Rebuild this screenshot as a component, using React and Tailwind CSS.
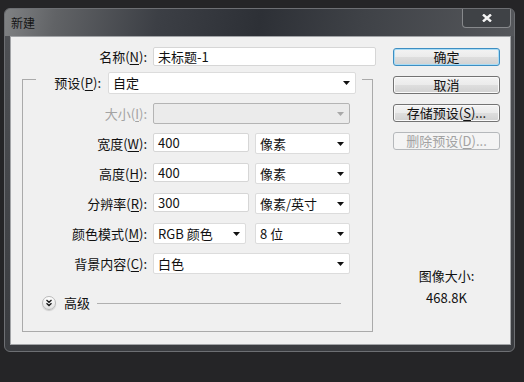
import React from 'react';

const FONT = "font-['Noto_Sans_CJK_SC','Noto_Sans',sans-serif]";

function Caret({ disabled }) {
  return (
    <svg width="7" height="4" viewBox="0 0 7 4" className="shrink-0">
      <path d="M0 0 L7 0 L3.5 4 Z" fill={disabled ? '#a9a9a9' : '#111'} />
    </svg>
  );
}

function Label({ text, hot, w = 'w-[124px]', disabled }) {
  return (
    <span className={`${w} shrink-0 text-right ${disabled ? 'text-[#a3a3a3]' : 'text-[#111]'}`}>
      {text}(<u className="underline-offset-2">{hot}</u>):
    </span>
  );
}

function Input({ value, w }) {
  return (
    <div className={`${w} h-[19px] bg-white border border-[#d6d6d6] rounded-[2px] pl-[4px] flex items-center text-[#111]`}>
      {value}
    </div>
  );
}

function Select({ value, w, disabled, h = 'h-[21px]' }) {
  return (
    <div
      className={`${w} ${h} border rounded-[2px] pl-[4px] pr-[5px] flex items-center justify-between ${
        disabled ? 'bg-[#ebebeb] border-[#b4b4b4]' : 'bg-white border-[#dcdcdc] text-[#111]'
      }`}
    >
      <span>{value}</span>
      <Caret disabled={disabled} />
    </div>
  );
}

function Button({ children, hot, primary, disabled }) {
  return (
    <div
      className={`w-[107px] h-[18px] rounded-[3px] border flex items-center justify-center ${
        disabled
          ? 'border-[#b5b8bb] bg-[#f4f4f4] text-[#a2a2a2]'
          : primary
          ? 'border-[#3d8ec2] shadow-[inset_0_0_0_1px_#a9dcf5] bg-[linear-gradient(to_bottom,#f3f3f3_0%,#ebebeb_50%,#dedede_51%,#d2d2d2_100%)] text-[#111]'
          : 'border-[#737373] shadow-[inset_0_0_0_1px_#fafafa] bg-[linear-gradient(to_bottom,#f3f3f3_0%,#ebebeb_50%,#dedede_51%,#d2d2d2_100%)] text-[#111]'
      }`}
    >
      {children}
      {hot && (
        <>
          (<u className="underline-offset-2">{hot}</u>)...
        </>
      )}
    </div>
  );
}

export default function App() {
  return (
    <div className={`w-[524px] h-[382px] bg-[#252527] pt-[8px] pl-[4px] text-[13px] leading-[18px] ${FONT}`}>
      {/* window frame */}
      <div className="w-[511px] h-[344px] rounded-[6px] border border-[#6d6f73] bg-[linear-gradient(to_bottom,#505256,#3a3c40)] flex flex-col overflow-hidden">
        {/* title bar */}
        <div className="h-[27px] shrink-0 flex justify-between bg-[linear-gradient(100deg,#808284_0%,#616366_10%,#3c3f45_30%,#2d3036_50%,#3f4247_70%,#55575b_100%)]">
          <span className="ml-[6px] mt-[5px] text-[12px] text-[#151515]">新建</span>
          <div className="mr-[3px] w-[49px] h-[19px] rounded-b-[4px] border border-t-0 border-[#87898c] bg-[#3f4246] flex items-center justify-center">
            <svg width="10" height="8" viewBox="0 0 10 8">
              <path d="M1 0.5 L9 7.5 M9 0.5 L1 7.5" stroke="#f4f4f4" strokeWidth="2.4" />
            </svg>
          </div>
        </div>

        {/* client area */}
        <div className="flex-1 ml-[5px] mr-[3px] mb-[6px] border border-[#a2a4a7] bg-[#f0f0f0] flex">
          {/* left column */}
          <div className="pl-[11px] pt-[10px] flex flex-col">
            <div className="flex items-center h-[19px]">
              <Label text="名称" hot="N" w="w-[125px]" />
              <div className="ml-[6px]">
                <Input value="未标题-1" w="w-[223px]" />
              </div>
            </div>

            {/* group box */}
            <div className="mt-[13px] w-[351px] border border-[#aaaaaa] pb-[20px] flex flex-col">
              <div className="-mt-[8px] ml-[13px] w-[326px] h-[22px] bg-[#f0f0f0] flex items-center">
                <Label text="预设" hot="P" w="w-[65px]" />
                <div className="ml-[7px]">
                  <Select value="自定" w="w-[248px]" h="h-[22px]" />
                </div>
              </div>

              <div className="mt-[9px] flex flex-col gap-[9px]">
                <div className="h-[21px] flex items-center">
                  <Label text="大小" hot="I" disabled />
                  <div className="ml-[6px]">
                    <Select value="" w="w-[197px]" disabled />
                  </div>
                </div>
                <div className="h-[21px] flex items-center">
                  <Label text="宽度" hot="W" />
                  <div className="ml-[6px] flex gap-[6px]">
                    <Input value="400" w="w-[96px]" />
                    <Select value="像素" w="w-[95px]" />
                  </div>
                </div>
                <div className="h-[21px] flex items-center">
                  <Label text="高度" hot="H" />
                  <div className="ml-[6px] flex gap-[6px]">
                    <Input value="400" w="w-[96px]" />
                    <Select value="像素" w="w-[95px]" />
                  </div>
                </div>
                <div className="h-[21px] flex items-center">
                  <Label text="分辨率" hot="R" />
                  <div className="ml-[6px] flex gap-[6px]">
                    <Input value="300" w="w-[96px]" />
                    <Select value="像素/英寸" w="w-[95px]" />
                  </div>
                </div>
                <div className="h-[21px] flex items-center">
                  <Label text="颜色模式" hot="M" />
                  <div className="ml-[6px] flex gap-[9px]">
                    <Select value="RGB 颜色" w="w-[93px]" />
                    <Select value="8 位" w="w-[95px]" />
                  </div>
                </div>
                <div className="h-[21px] flex items-center">
                  <Label text="背景内容" hot="C" />
                  <div className="ml-[6px]">
                    <Select value="白色" w="w-[197px]" />
                  </div>
                </div>
              </div>

              {/* advanced */}
              <div className="mt-[21px] ml-[19px] h-[16px] flex items-center">
                <div className="w-[14px] h-[14px] rounded-full border border-[#b9b9b9] bg-[linear-gradient(to_bottom,#ffffff,#e2e2e2)] shadow-[0_1px_1px_rgba(0,0,0,0.15)] flex items-center justify-center">
                  <svg width="8" height="8" viewBox="0 0 8 8">
                    <path d="M1.5 1 L4 3.3 L6.5 1 M1.5 4.2 L4 6.5 L6.5 4.2" stroke="#1a1a1a" strokeWidth="1.3" fill="none" />
                  </svg>
                </div>
                <span className="ml-[8px] text-[#111]">高级</span>
                <div className="ml-[7px] w-[244px] h-px bg-[#b0b0b0]" />
              </div>
            </div>
          </div>

          {/* right column */}
          <div className="ml-[17px] pt-[11px] flex flex-col">
            <div className="flex flex-col gap-[10px]">
              <Button primary>确定</Button>
              <Button>取消</Button>
              <Button hot="S">存储预设</Button>
              <Button hot="D" disabled>删除预设</Button>
            </div>
            <div className="mt-[117px] flex flex-col items-center gap-[4px] text-[#111]">
              <span>图像大小:</span>
              <span>468.8K</span>
            </div>
          </div>
        </div>
      </div>
    </div>
  );
}
